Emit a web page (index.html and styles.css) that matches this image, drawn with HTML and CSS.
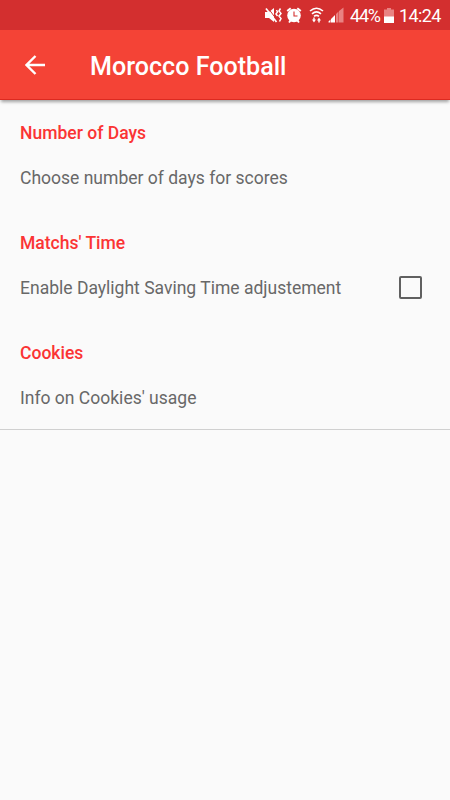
FILE: index.html
```html
<!DOCTYPE html>
<html lang="en">
<head>
<meta charset="utf-8">
<title>Morocco Football</title>
<link rel="stylesheet" href="styles.css">
</head>
<body>
<header class="status">
  <svg class="icons" width="80" height="30" viewBox="264 0 80 30">
    <path fill="#fff" d="M265 12h4l5-4v14l-5-4h-4z"/>
    <path d="M268 8l9 12" stroke="#d32f2f" stroke-width="1"/>
    <path d="M266 8.500l10.500 13.500" stroke="#fff" stroke-width="1.700"/>
    <path d="M276.500 10l1 2-1.500 2 1.500 2M280.500 8.500l-1.500 2.500 2 2.500-2 2.500 2 2.500-1.500 3" fill="none" stroke="#fff" stroke-width="1.500"/>
    <circle cx="294" cy="15.500" r="6.800" fill="#fff"/>
    <path d="M287.200 11l3.500-2.700M300.800 11l-3.500-2.700M289 22.500l2-2.500M299 22.500l-2-2.500" stroke="#fff" stroke-width="2"/>
    <path d="M294 11.500v4.500h3.500" fill="none" stroke="#d32f2f" stroke-width="1.100"/>
    <path d="M310 11q6.500-5.500 13 0M312 13.800q4.500-3.800 9 0M314 16.400q2.500-2 5 0" fill="none" stroke="#fff" stroke-width="1.600"/>
    <path d="M312 19.500h1.300v-2h1.400v2h1.300l-2 3zM317 20.500l2-3 2 3h-1.300v2h-1.400v-2z" fill="#fff"/>
    <path d="M328.500 22.500v-1l2-2v3zM331 22.500v-3.500l4-4v7.500z" fill="#fff"/>
    <path d="M336 22.500v-8.500l2.500-2.500v11zM339 22.500V11l4.500-3.500v15z" fill="#e98282"/>
  </svg>
  <span class="percent">44%</span>
  <svg class="battery" width="10" height="15" viewBox="0 0 10 15"><path fill="#e98282" d="M3 0h4v1.500h3V15H0V1.500h3z"/><path fill="#fff" d="M0 8.500h10V15H0z"/></svg>
  <span class="clock">14:24</span>
</header>
<div class="toolbar">
  <svg width="20" height="20" viewBox="0 0 20 20"><path d="M20 10H2M10.500 1L1.500 10l9 9" fill="none" stroke="#fff" stroke-width="2.400"/></svg>
  <h1>Morocco Football</h1>
</div>
<main>
  <section><h2>Number of Days</h2><div class="row">Choose number of days for scores</div></section>
  <section><h2>Matchs' Time</h2><div class="row">Enable Daylight Saving Time adjustement<span class="checkbox"></span></div></section>
  <section><h2>Cookies</h2><div class="row">Info on Cookies' usage</div></section>
</main>
</body>
</html>
```
FILE: styles.css
```css
* { box-sizing: border-box; }
body { margin: 0; height: 800px; background: #fafafa; font-family: Roboto, sans-serif; overflow: hidden; }
.status { height: 30px; background: #d32f2f; color: #fff; display: flex; align-items: center; font-size: 18px; line-height: 30px; padding-left: 264px; white-space: nowrap; }
.icons { flex: none; }
.percent { width: 34px; margin-left: 6px; padding-top: 2px; letter-spacing: -1.2px; }
.battery { flex: none; margin-top: 1px; }
.clock { margin-left: 5px; padding-top: 2px; letter-spacing: -.6px; }
.toolbar { height: 70px; background: #f44336; display: flex; align-items: center; padding-left: 25px; border-bottom: 1px solid #dc2a20; box-shadow: 0 3px 3px -1px rgba(0,0,0,.35); }
h1 { margin: 4px 0 0 45px; color: #fff; font-size: 25.100px; font-weight: 500; line-height: 32px; }
main { border-bottom: 1px solid #d0d0d0; height: 330px; }
section { height: 110px; padding: 20px 28px 0 20px; }
h2 { margin: 0; font-size: 17.550px; line-height: 26px; font-weight: 500; color: #fb3434; }
.row { height: 60px; margin-top: 2px; display: flex; align-items: center; justify-content: space-between; font-size: 17.520px; color: #686868; }
.checkbox { width: 23px; height: 23px; margin-top: -2px; border: 2px solid #606060; border-radius: 2px; }
```
